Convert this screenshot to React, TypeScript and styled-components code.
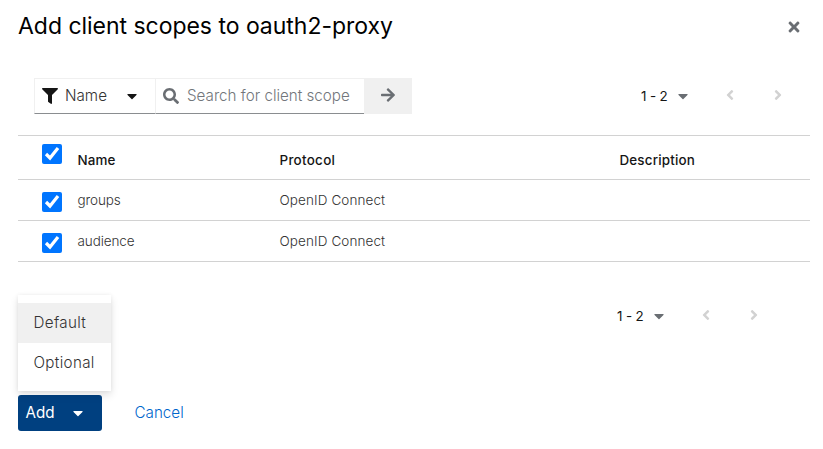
import React from "react";
import styled, { createGlobalStyle } from "styled-components";
import {
  FaAngleLeft,
  FaAngleRight,
  FaArrowRight,
  FaCaretDown,
  FaFilter,
  FaSearch,
  FaTimes,
} from "react-icons/fa";

const GlobalStyle = createGlobalStyle`
  *, *::before, *::after { box-sizing: border-box; }
  body {
    margin: 0;
    background: #fff;
    color: #151515;
    font-family: Inter, "Open Sans", sans-serif;
    font-size: 15.2px;
    font-weight: 300;
    overflow: hidden;
  }
  button, input { font: inherit; color: inherit; letter-spacing: inherit; }
  button { margin: 0; padding: 0; border: 0; background: transparent; }
  svg { display: block; flex: none; }
`;

const Modal = styled.main`
  display: flex;
  flex-direction: column;
  width: 823px;
  height: 449px;
  padding: 0 13px 0 18px;
`;

const Header = styled.header`
  display: flex;
  justify-content: space-between;
  height: 78px;
  padding: 9px 8px 0 0;
`;

const Title = styled.h1`
  margin: 0;
  color: #000;
  font-size: 23px;
  line-height: 34px;
  font-weight: 400;
  letter-spacing: -0.03px;
`;

const CloseButton = styled.button`
  display: flex;
  align-items: center;
  height: 36px;
  color: #6a6e73;
`;

const Toolbar = styled.div`
  display: flex;
  justify-content: space-between;
  height: 57px;
  padding: 0 32px 0 16px;
`;

const SearchGroup = styled.div`
  display: flex;
  height: 36px;
`;

const FilterSelect = styled.button`
  display: flex;
  align-items: center;
  width: 121px;
  padding-left: 7px;
  border: 1px solid #f0f0f0;
  border-right: 0;
  border-bottom-color: #8a8d90;
`;

const FilterLabel = styled.span`
  width: 66px;
  padding: 0 0 2px 7px;
  color: #333;
  text-align: left;
`;

const SearchField = styled.label`
  display: flex;
  align-items: center;
  width: 209px;
  padding-left: 7px;
  border: 1px solid #f0f0f0;
  border-right: 0;
  border-bottom-color: #8a8d90;
  color: #6a6e73;
`;

const SearchInput = styled.input`
  flex: 1;
  min-width: 0;
  padding: 0 0 2px 8px;
  border: 0;
  outline: 0;
  background: transparent;
  &::placeholder { color: #72767b; opacity: 1; }
`;

const SubmitButton = styled.button`
  display: flex;
  align-items: center;
  justify-content: center;
  width: 48px;
  padding-bottom: 2px;
  background: #f0f0f0;
  color: #6a6e73;
`;

const Pager = styled.div`
  display: flex;
  align-items: center;
  height: 36px;
`;

const PagerRange = styled.span`
  width: 34px;
  font-size: 13.4px;
  font-weight: 400;
  letter-spacing: -0.15px;
`;

const PagerCaret = styled.span`
  width: 47px;
  padding-bottom: 1px;
  color: #6a6e73;
`;

const PagerArrow = styled.button`
  width: 48px;
  padding-bottom: 2px;
  color: #d2d2d2;
  &:last-child { width: 8px; }
`;

const Table = styled.div`
  width: 792px;
  border-top: 1px solid #d2d2d2;
`;

const Row = styled.div<{ $head?: boolean }>`
  display: grid;
  grid-template-columns: 59.5px 202px 340px 1fr;
  height: ${(p) => (p.$head ? 44 : 41)}px;
  border-bottom: 1px solid #d2d2d2;
  color: ${(p) => (p.$head ? "#151515" : "#333")};
  font-size: ${(p) => (p.$head ? 13.4 : 13.5)}px;
  font-weight: ${(p) => (p.$head ? 500 : 300)};
  line-height: ${(p) => (p.$head ? 48 : 41)}px;
`;

const Check = styled.input<{ $top: number }>`
  width: 20px;
  height: 20px;
  margin: ${(p) => p.$top}px 0 0 24px;
`;

const Cell = styled.span<{ $tracking?: number }>`
  letter-spacing: ${(p) => p.$tracking ?? 0}px;
`;

const BottomBar = styled.div`
  display: flex;
  justify-content: flex-end;
  height: 97px;
  padding: 36px 56px 0 0;
`;

const Footer = styled.footer`
  display: flex;
  align-items: center;
  gap: 32.5px;
  height: 36px;
  margin-top: 36px;
`;

const Dropdown = styled.div`
  position: relative;
`;

const AddButton = styled.button`
  display: flex;
  align-items: center;
  width: 84px;
  height: 36px;
  padding: 0 0 0 7.5px;
  border-radius: 3px;
  background: #004080;
  color: #fff;
  font-weight: 400;
`;

const AddLabel = styled.span`
  width: 44.5px;
  padding-bottom: 2px;
  text-align: left;
`;

const Menu = styled.div`
  position: absolute;
  bottom: 40px;
  left: 0;
  width: 93px;
  height: 96px;
  padding: 8px 0;
  background: #fff;
  box-shadow: 0 4px 8px rgba(3, 3, 3, 0.12), 0 0 4px rgba(3, 3, 3, 0.06);
`;

const MenuItem = styled.div<{ $active?: boolean }>`
  height: 40px;
  padding-left: 15.5px;
  background: ${(p) => (p.$active ? "#f0f0f0" : "transparent")};
  color: #333;
  line-height: 40px;
  letter-spacing: 0.33px;
`;

const CancelButton = styled.button`
  padding-bottom: 2px;
  color: #0066cc;
`;

const scopes = [
  { name: "groups", protocol: "OpenID Connect" },
  { name: "audience", protocol: "OpenID Connect" },
];

function Pagination() {
  return (
    <Pager>
      <PagerRange>1 - 2</PagerRange>
      <PagerCaret><FaCaretDown size={16} /></PagerCaret>
      <PagerArrow aria-label="Previous page"><FaAngleLeft size={16} /></PagerArrow>
      <PagerArrow aria-label="Next page"><FaAngleRight size={16} /></PagerArrow>
    </Pager>
  );
}

export default function App() {
  return (
    <>
      <GlobalStyle />
      <Modal>
        <Header>
          <Title>Add client scopes to oauth2-proxy</Title>
          <CloseButton aria-label="Close"><FaTimes size={16} /></CloseButton>
        </Header>
        <Toolbar>
          <SearchGroup>
            <FilterSelect>
              <FaFilter size={16} />
              <FilterLabel>Name</FilterLabel>
              <FaCaretDown size={16} />
            </FilterSelect>
            <SearchField>
              <FaSearch size={16} />
              <SearchInput placeholder="Search for client scope" />
            </SearchField>
            <SubmitButton aria-label="Search"><FaArrowRight size={16} /></SubmitButton>
          </SearchGroup>
          <Pagination />
        </Toolbar>
        <Table>
          <Row $head>
            <Check type="checkbox" defaultChecked $top={8} />
            <Cell $tracking={0.1}>Name</Cell>
            <Cell $tracking={0.3}>Protocol</Cell>
            <Cell $tracking={0.17}>Description</Cell>
          </Row>
          {scopes.map((s) => (
            <Row key={s.name}>
              <Check type="checkbox" defaultChecked $top={12} />
              <Cell $tracking={-0.1}>{s.name}</Cell>
              <Cell $tracking={0.1}>{s.protocol}</Cell>
            </Row>
          ))}
        </Table>
        <BottomBar><Pagination /></BottomBar>
        <Footer>
          <Dropdown>
            <Menu>
              <MenuItem $active>Default</MenuItem>
              <MenuItem>Optional</MenuItem>
            </Menu>
            <AddButton>
              <AddLabel>Add</AddLabel>
              <FaCaretDown size={16} />
            </AddButton>
          </Dropdown>
          <CancelButton>Cancel</CancelButton>
        </Footer>
      </Modal>
    </>
  );
}
